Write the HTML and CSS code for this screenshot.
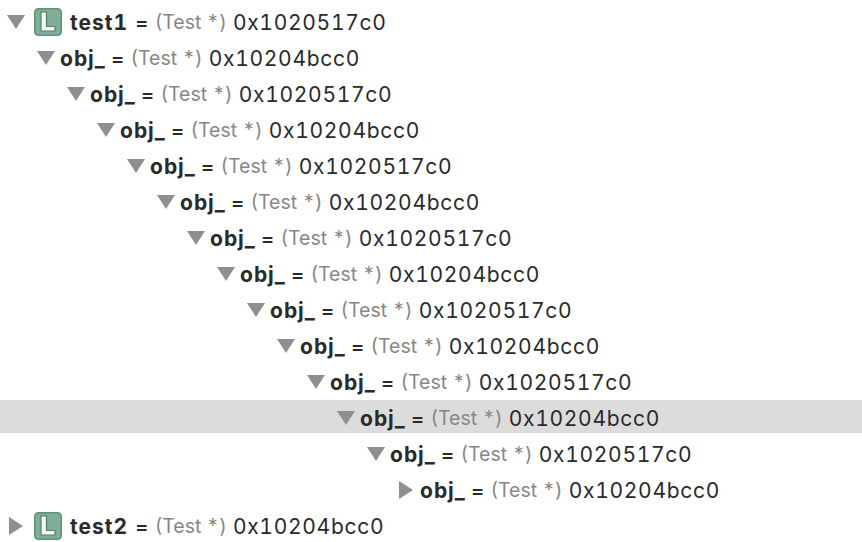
FILE: index.html
```html
<!DOCTYPE html>
<html lang="en">
	<head>
		<meta charset="UTF-8" />
		<title>Variables</title>
		<link rel="stylesheet" href="styles.css">
	</head>
	<body>
		<ul class="var-tree">
			<li class="var-row">
				<svg class="disclosure" viewBox="0 0 18 18"><path d="M0 2h18L9 16z" /></svg>
				<svg class="local-icon" viewBox="0 0 28 28"><rect x="0.75" y="0.75" width="26.5" height="26.5" rx="3.5" class="local-bg" /><path d="M7 4h5.5v14.5H21V23H7z" class="local-letter" /></svg>
				<span class="var-name">test1</span> <span class="var-eq">=</span> <span class="var-type">(Test *)</span> <span class="var-value">0x1020517c0</span>
			</li>
			<li class="var-row" style="--depth: 1"><svg class="disclosure" viewBox="0 0 18 18"><path d="M0 2h18L9 16z" /></svg><span class="var-name">obj_</span> <span class="var-eq">=</span> <span class="var-type">(Test *)</span> <span class="var-value">0x10204bcc0</span></li>
			<li class="var-row" style="--depth: 2"><svg class="disclosure" viewBox="0 0 18 18"><path d="M0 2h18L9 16z" /></svg><span class="var-name">obj_</span> <span class="var-eq">=</span> <span class="var-type">(Test *)</span> <span class="var-value">0x1020517c0</span></li>
			<li class="var-row" style="--depth: 3"><svg class="disclosure" viewBox="0 0 18 18"><path d="M0 2h18L9 16z" /></svg><span class="var-name">obj_</span> <span class="var-eq">=</span> <span class="var-type">(Test *)</span> <span class="var-value">0x10204bcc0</span></li>
			<li class="var-row" style="--depth: 4"><svg class="disclosure" viewBox="0 0 18 18"><path d="M0 2h18L9 16z" /></svg><span class="var-name">obj_</span> <span class="var-eq">=</span> <span class="var-type">(Test *)</span> <span class="var-value">0x1020517c0</span></li>
			<li class="var-row" style="--depth: 5"><svg class="disclosure" viewBox="0 0 18 18"><path d="M0 2h18L9 16z" /></svg><span class="var-name">obj_</span> <span class="var-eq">=</span> <span class="var-type">(Test *)</span> <span class="var-value">0x10204bcc0</span></li>
			<li class="var-row" style="--depth: 6"><svg class="disclosure" viewBox="0 0 18 18"><path d="M0 2h18L9 16z" /></svg><span class="var-name">obj_</span> <span class="var-eq">=</span> <span class="var-type">(Test *)</span> <span class="var-value">0x1020517c0</span></li>
			<li class="var-row" style="--depth: 7"><svg class="disclosure" viewBox="0 0 18 18"><path d="M0 2h18L9 16z" /></svg><span class="var-name">obj_</span> <span class="var-eq">=</span> <span class="var-type">(Test *)</span> <span class="var-value">0x10204bcc0</span></li>
			<li class="var-row" style="--depth: 8"><svg class="disclosure" viewBox="0 0 18 18"><path d="M0 2h18L9 16z" /></svg><span class="var-name">obj_</span> <span class="var-eq">=</span> <span class="var-type">(Test *)</span> <span class="var-value">0x1020517c0</span></li>
			<li class="var-row" style="--depth: 9"><svg class="disclosure" viewBox="0 0 18 18"><path d="M0 2h18L9 16z" /></svg><span class="var-name">obj_</span> <span class="var-eq">=</span> <span class="var-type">(Test *)</span> <span class="var-value">0x10204bcc0</span></li>
			<li class="var-row" style="--depth: 10"><svg class="disclosure" viewBox="0 0 18 18"><path d="M0 2h18L9 16z" /></svg><span class="var-name">obj_</span> <span class="var-eq">=</span> <span class="var-type">(Test *)</span> <span class="var-value">0x1020517c0</span></li>
			<li class="var-row selected" style="--depth: 11"><svg class="disclosure" viewBox="0 0 18 18"><path d="M0 2h18L9 16z" /></svg><span class="var-name">obj_</span> <span class="var-eq">=</span> <span class="var-type">(Test *)</span> <span class="var-value">0x10204bcc0</span></li>
			<li class="var-row" style="--depth: 12"><svg class="disclosure" viewBox="0 0 18 18"><path d="M0 2h18L9 16z" /></svg><span class="var-name">obj_</span> <span class="var-eq">=</span> <span class="var-type">(Test *)</span> <span class="var-value">0x1020517c0</span></li>
			<li class="var-row" style="--depth: 13"><svg class="disclosure" viewBox="0 0 18 18"><path d="M2 0l14 9-14 9z" /></svg><span class="var-name">obj_</span> <span class="var-eq">=</span> <span class="var-type">(Test *)</span> <span class="var-value">0x10204bcc0</span></li>
			<li class="var-row">
				<svg class="disclosure" viewBox="0 0 18 18"><path d="M2 0l14 9-14 9z" /></svg>
				<svg class="local-icon" viewBox="0 0 28 28"><rect x="0.75" y="0.75" width="26.5" height="26.5" rx="3.5" class="local-bg" /><path d="M7 4h5.5v14.5H21V23H7z" class="local-letter" /></svg>
				<span class="var-name">test2</span> <span class="var-eq">=</span> <span class="var-type">(Test *)</span> <span class="var-value">0x10204bcc0</span>
			</li>
		</ul>
	</body>
</html>
```

FILE: styles.css
```css
body {
	margin: 0;
	height: 100vh;
	overflow: hidden;
	background-color: #fff;
	color: #2a2a2a;
	font-family: Inter, "Liberation Sans", sans-serif;
	font-size: 21px;
	font-variant-numeric: tabular-nums;
}

.var-tree {
	list-style: none;
	margin: 0;
	padding: 4px 0 0;
}

.var-row {
	display: flex;
	align-items: center;
	height: 36px;
	padding-left: calc(7px + 30px * var(--depth, 0));
	white-space: pre;
}

.var-row.selected {
	background: linear-gradient(#dcdcdc 33px, #fff 33px);
}

.disclosure {
	flex-shrink: 0;
	width: 18px;
	height: 18px;
	margin-right: 5px;
	fill: #8f8f8f;
}

.local-icon {
	flex-shrink: 0;
	width: 28px;
	height: 28px;
	margin: 0 8px 0 4px;
}

.local-bg {
	fill: #80ad95;
	stroke: #5f9478;
	stroke-width: 1.5;
}

.local-letter {
	fill: #f6f9f7;
	stroke: #4f8268;
	stroke-width: 1.2;
}

.var-name {
	font-weight: 700;
	letter-spacing: 1px;
	margin-right: 5px;
}

/* top level names sit a bit further from the = */
.local-icon + .var-name {
	margin-right: 7px;
}

.var-eq {
	font-weight: 500;
	margin-right: 6px;
}

.var-type {
	font-size: 19.5px;
	color: #878787;
	margin-right: 6px;
}

.var-value {
	letter-spacing: 0.7px;
}
```
